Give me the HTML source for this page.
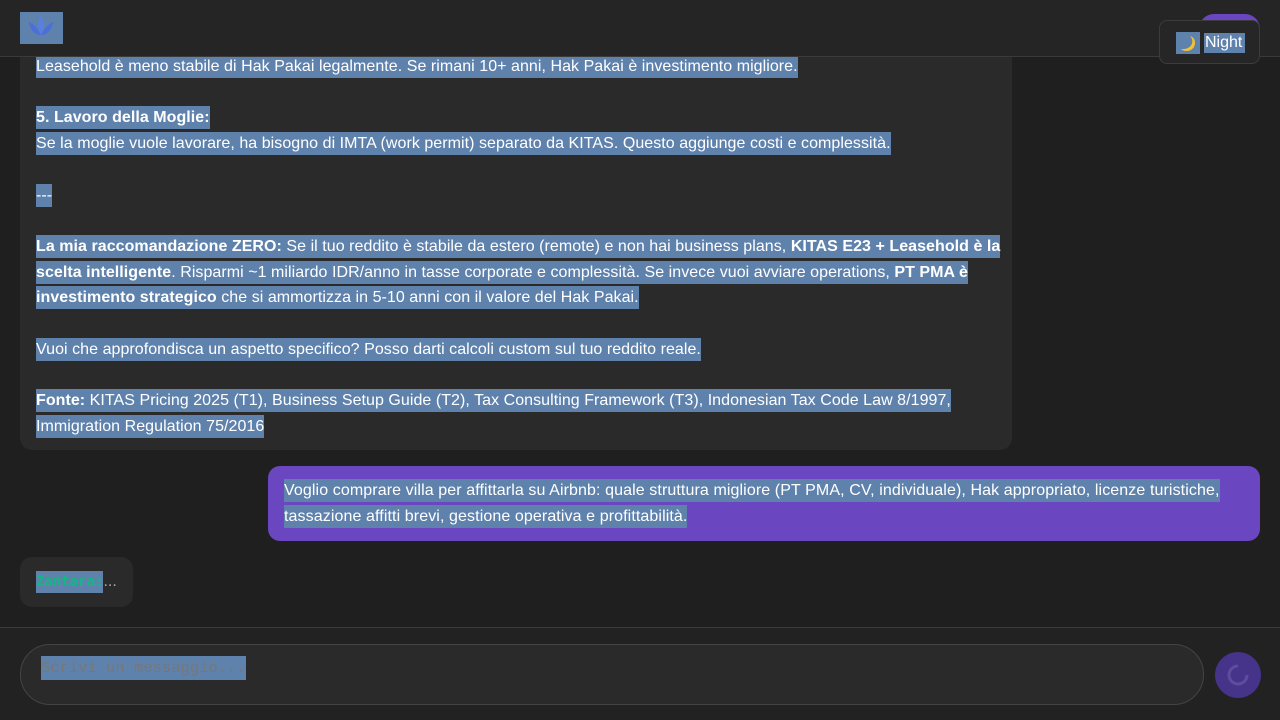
<!DOCTYPE html>
<html><head><meta charset="utf-8"><style>
*{margin:0;padding:0;box-sizing:border-box}
body{width:1280px;height:720px;overflow:hidden;background:#1f1f1f;font-family:"Liberation Sans",sans-serif;font-size:16px;color:#fff;position:relative}
.s{background:#5f82ad;padding:3px 0}
.hdr{position:absolute;top:0;left:0;width:1280px;height:57px;background:#252525;border-bottom:1px solid #3a3a3a;z-index:2}
.logo{position:absolute;left:20px;top:12px;width:43px;height:32px;background:#5f82ad}
.ab{position:absolute;left:20px;top:20px;width:992px;height:430px;background:#2a2a2a;border-radius:12px}
.txt{position:absolute;left:36px;top:54px;width:965px;line-height:25.7px;letter-spacing:0.05px}
.ub{position:absolute;left:268px;top:466px;width:992px;height:75px;background:#6b46c1;border-radius:12px;padding:12px 16px;line-height:26px;letter-spacing:0.1px}
.zb{position:absolute;left:20px;top:557px;width:113px;height:50px;background:#2a2a2a;border-radius:12px;padding:12px 16px;line-height:26px}
.ftr{position:absolute;left:0;top:627px;width:1280px;height:93px;background:#222;border-top:1px solid #3a3a3a}
.inp{position:absolute;left:20px;top:16px;width:1184px;height:61px;border:1px solid #444;border-radius:30px;background:#2a2a2a}
.ph{position:absolute;left:20px;top:11px;font-family:"Liberation Mono",monospace;color:#777;font-size:15.5px}
.btn{position:absolute;left:1215px;top:24px;width:46px;height:46px;border-radius:50%;background:#46338a}
.night{position:absolute;left:1159px;top:20px;width:101px;height:44px;border:1px solid #3c3c3c;border-radius:8px;background:#262626;z-index:4}
.pur{position:absolute;left:1199px;top:14px;width:61px;height:30px;border-radius:15px 15px 0 0;background:#6b46c1;z-index:3}
</style></head><body>
<div class="hdr"><div class="logo"><svg width="43" height="32" viewBox="0 0 43 32"><path d="M21 4 C17 10 17 16 21 22 C25 16 25 10 21 4Z" fill="#5a7fe0"/><path d="M9 10 C10 18 15 23 21 23 C18 17 14 12 9 10Z" fill="#4a6fd8"/><path d="M33 10 C32 18 27 23 21 23 C24 17 28 12 33 10Z" fill="#4a6fd8"/></svg></div></div>
<div class="pur"></div>
<div class="night"><svg style="position:absolute;left:16px;top:11px" width="24" height="22" viewBox="0 0 24 22"><rect width="24" height="22" fill="#5f82ad"/><path d="M14 4 C19 9 16 18 5 17 C9 21 19 19 19 11 C19 7 17 5 14 4Z" fill="#f2c230"/></svg><span class="s" style="position:absolute;left:44px;top:12px;line-height:18px;padding:1px 3px 1px 1px">Night</span></div>
<div class="ab"></div>
<div class="txt">
<span class="s">Leasehold è meno stabile di Hak Pakai legalmente. Se rimani 10+ anni, Hak Pakai è investimento migliore. </span><br><br>
<span class="s"><b>5. Lavoro della Moglie:</b> </span><br>
<span class="s">Se la moglie vuole lavorare, ha bisogno di IMTA (work permit) separato da KITAS. Questo aggiunge costi e complessità. </span><br><br>
<span class="s">--- </span><br><br>
<span class="s"><b>La mia raccomandazione ZERO:</b> Se il tuo reddito è stabile da estero (remote) e non hai business plans, <b>KITAS E23 + Leasehold è la scelta intelligente</b>. Risparmi ~1 miliardo IDR/anno in tasse corporate e complessità. Se invece vuoi avviare operations, <b>PT PMA è investimento strategico</b> che si ammortizza in 5-10 anni con il valore del Hak Pakai. </span><br><br>
<span class="s">Vuoi che approfondisca un aspetto specifico? Posso darti calcoli custom sul tuo reddito reale. </span><br><br>
<span class="s"><b>Fonte:</b> KITAS Pricing 2025 (T1), Business Setup Guide (T2), Tax Consulting Framework (T3), Indonesian Tax Code Law 8/1997, Immigration Regulation 75/2016 </span>
</div>
<div class="ub"><span class="s">Voglio comprare villa per affittarla su Airbnb: quale struttura migliore (PT PMA, CV, individuale), Hak appropriato, licenze turistiche, tassazione affitti brevi, gestione operativa e profittabilità. </span></div>
<div class="zb"><span class="s" style="color:#10b981;font-weight:bold;font-family:'DejaVu Sans Mono',monospace;font-size:14px">Zantara:</span><span style="color:#aaa">...</span></div>
<div class="ftr"><div class="inp"><span class="ph s">Scrivi un messaggio...</span></div>
<div class="btn"><svg width="46" height="46" viewBox="0 0 46 46"><circle cx="23" cy="23" r="9" fill="none" stroke="#5d4d9c" stroke-width="3"/><path d="M23 14 A9 9 0 0 1 32 23" fill="none" stroke="#46338a" stroke-width="3.5"/></svg></div></div>
</body></html>
